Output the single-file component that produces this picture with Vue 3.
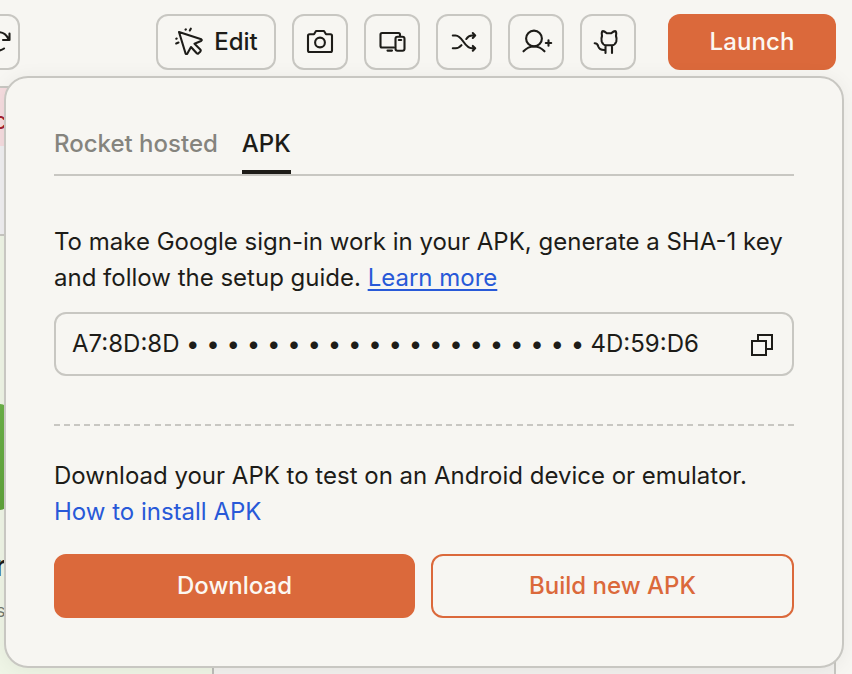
<script setup>
const dots = Array.from({ length: 20 }, (_, i) => i)
</script>

<template>
  <div class="screen">
    <div class="preview">
      <div class="alert"><span>c</span></div>
      <div class="band"></div>
      <div class="canvas">
        <div class="blob"></div>
        <div class="title">r</div>
        <div class="subtitle">s</div>
      </div>
      <div class="side"></div>
    </div>

    <header class="toolbar">
      <button class="tool refresh">
        <svg width="24" height="24" viewBox="0 0 24 24"><path d="M2 9C6 0 16 0 20.500 9M21.500 3.500V10H15M2 16C6 21.500 12 21.500 16 18.500" /></svg>
      </button>
      <button class="tool edit">
        <svg width="30" height="30" viewBox="0 0 30 30">
          <path d="M5 5L27.300 12.300Q28.500 13.200 27 14L20.500 16.700L26.500 22.700Q27.200 23.700 26.200 24.800L24.500 26.300Q23.500 27 22.500 26L17 20L13.500 26.300Q12.500 27.800 11.500 26.300Z" />
          <path d="M11.500 2.700L11.900 2.400M15.800 3.500L16.800 1.700M2.300 11.700L2.700 11.500M2.200 16.500L4.500 15.600" />
        </svg>
        <span>Edit</span>
      </button>
      <button class="tool">
        <svg width="28" height="28" viewBox="0 0 28 28">
          <path d="M3.500 6.200H8L10 3H18L20 6.200H24.500Q26 6.200 26 7.700V22.500Q26 24 24.500 24H3.500Q2 24 2 22.500V7.700Q2 6.200 3.500 6.200Z" />
          <circle cx="14" cy="14.500" r="4.900" />
        </svg>
      </button>
      <button class="tool">
        <svg width="28" height="28" viewBox="0 0 28 28">
          <path d="M16 19.500H4Q2.500 19.500 2.500 18V6.500Q2.500 5 4 5H20.500Q22 5 22 6.500V8M9.500 22.600H14" />
          <rect x="17.500" y="8.800" width="9" height="14" rx="2" />
          <path d="M20.800 12H23.200" />
        </svg>
      </button>
      <button class="tool">
        <svg width="28" height="28" viewBox="0 0 28 28">
          <path d="M2.800 7.500H5.500C13 7.500 14 20.300 22 20.300H25.200M2.800 20.300H5.500Q9 20.300 11.500 17.200M16.300 11Q18.500 7.500 22 7.500H25.200M22.800 5.100L25.200 7.500L22.800 9.900M22.800 17.900L25.200 20.300L22.800 22.700" />
        </svg>
      </button>
      <button class="tool">
        <svg class="person" width="32" height="28" viewBox="0 0 32 28">
          <circle cx="13" cy="10.500" r="7.900" />
          <path d="M2.500 23.300Q7 18.500 13 18.500T23.500 23.300M24.800 15H30.200M27.500 12.300V17.700" />
        </svg>
      </button>
      <button class="tool">
        <svg class="cat" width="28" height="28" viewBox="0 0 28 28">
          <path d="M10.200 3.300Q11.500 2.500 14.800 5.200H19.200Q22.500 2.500 23.800 3.300Q24.600 4.500 24 8Q25 10.500 24.300 13.500Q23 17.200 20 17.200H14Q11 17.200 9.700 13.500Q9 10.500 10 8Q9.400 4.500 10.200 3.300ZM13.500 18V25M20 18V25M2.700 15.300Q5.500 15.300 6.300 18.500Q7.500 22.300 13 22" />
        </svg>
      </button>
      <button class="launch">Launch</button>
    </header>

    <section class="panel">
      <nav class="tabs">
        <span class="tab">Rocket hosted</span>
        <span class="tab active">APK</span>
      </nav>
      <p class="copy intro">To make Google sign-in work in your APK, generate a SHA-1 key<br />and follow the setup guide. <a class="underlined">Learn more</a></p>
      <div class="key">
        <span class="part">A7:8D:8D</span>
        <span class="dots"><i v-for="d in dots" :key="d">•</i></span>
        <span class="part">4D:59:D6</span>
        <svg class="duplicate" width="24" height="24" viewBox="0 0 24 24"><path d="M2 8H16V22H2ZM8 8V2H22V16H16" /></svg>
      </div>
      <div class="divider"></div>
      <p class="copy outro">Download your APK to test on an Android device or emulator.<br /><a>How to install APK</a></p>
      <div class="actions">
        <button class="primary">Download</button>
        <button class="secondary">Build new APK</button>
      </div>
    </section>
  </div>
</template>

<style>
body { margin: 0; overflow: hidden; }
</style>

<style scoped>
* { box-sizing: border-box; }
.screen {
  position: relative;
  width: 852px;
  height: 674px;
  overflow: hidden;
  background: #f7f6f2;
  color: #1d1c18;
  font: 400 24px/36px Inter, sans-serif;
}
button { font: inherit; color: inherit; margin: 0; padding: 0; }
svg { fill: none; stroke: #1d1c18; stroke-width: 2.1; stroke-linecap: round; stroke-linejoin: round; flex: none; }
.preview {
  position: absolute;
  inset: 86px 16px 0 0;
  display: grid;
  grid-template: 58px 90px 1fr / 214px 622px;
  border-top: 2px solid #c8c7c2;
}
.alert { background: #f5dcdf; color: #a51f2d; overflow: hidden; }
.alert span { display: block; margin: 15px 0 0 -7px; }
.band { grid-row: 2; background: #f0eff1; border-bottom: 2px solid #c8c7c2; }
.canvas { grid-row: 3; background: #eff5e6; border-right: 2px solid #bdbdb9; overflow: hidden; }
.side { grid-area: 1 / 2 / 4 / 3; background: #f2f1ee; border-right: 2px solid #c8c7c2; }
.blob { width: 20px; height: 106px; margin: 168px 0 0 -12px; border-radius: 0 8px 8px 0; background: linear-gradient(#6bb148, #5fa23b); }
.title { margin: 38px 0 0 -5px; font-size: 28px; font-weight: 600; }
.subtitle { margin: 9px 0 0 -4px; font-size: 18px; color: #74796f; }
.toolbar { position: relative; display: flex; gap: 16px; padding: 14px 16px 0 0; }
.tool {
  width: 56px;
  height: 56px;
  display: flex;
  align-items: center;
  justify-content: center;
  border: 2px solid #c8c7c2;
  border-radius: 12px;
  background: #f7f6f2;
}
.refresh { margin: 0 120px 0 -36px; }
.refresh svg { margin-left: 15px; }
.edit { width: 120px; gap: 10px; font-weight: 500; }
.person { margin-left: 1px; }
.cat { margin-right: 4px; }
.launch {
  width: 168px;
  height: 56px;
  margin-left: 16px;
  border: 0;
  border-radius: 12px;
  background: #db693b;
  color: #fcf8f2;
  font-weight: 500;
  letter-spacing: 0.1px;
}
.panel {
  position: absolute;
  left: 4px;
  top: 76px;
  width: 840px;
  height: 592px;
  padding: 48px 48px 0;
  border: 2px solid #c8c7c2;
  border-radius: 24px;
  background: #f7f6f2;
  box-shadow: 0 2px 20px rgba(0, 0, 0, 0.06);
}
.tabs { display: flex; gap: 24px; height: 50px; border-bottom: 2px solid #c8c7c2; font-weight: 500; }
.tab { height: 48px; color: #85847e; }
.tab.active { color: #1d1c18; border-bottom: 4px solid #1d1c18; }
.copy { margin: 0; white-space: nowrap; }
.intro { margin-top: 48px; }
.copy a { color: #2859d8; }
.copy .underlined { text-decoration: underline; text-decoration-thickness: 2px; text-underline-offset: 3px; }
.key { display: flex; align-items: center; height: 64px; margin-top: 16px; padding: 0 18px 0 16px; border: 2px solid #c8c7c2; border-radius: 12px; }
.dots { display: flex; justify-content: space-between; width: 405px; margin: 0 3px; }
.dots i { width: 20.250px; text-align: center; font-style: normal; }
.duplicate { margin: 1px 0 0 auto; stroke-width: 2; stroke-linejoin: miter; }
.divider { height: 2px; margin-top: 48px; background: repeating-linear-gradient(90deg, #c8c7c2 0 6px, transparent 6px 10.055px); }
.outro { margin-top: 32px; }
.actions { display: grid; grid-template-columns: 361px 363px; gap: 16px; margin-top: 24px; }
.actions button { height: 64px; border-radius: 12px; font-weight: 500; border: 2px solid #db693b; }
.actions .primary { background: #db693b; color: #fcf8f2; }
.actions .secondary { background: transparent; color: #db693b; }
</style>
